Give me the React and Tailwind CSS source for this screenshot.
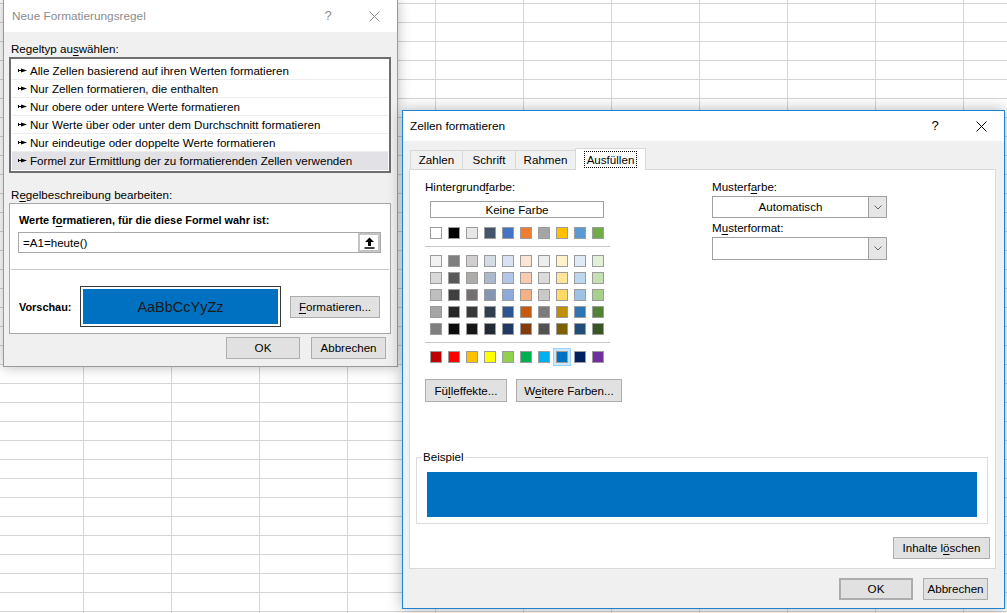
import React from 'react';

// Excel: Bedingte Formatierung + Zellen formatieren (Ausfüllen)

const U = ({ children }) => <span className="underline underline-offset-[2px]">{children}</span>;

const Btn = ({ className = '', children }) => (
  <div className={`flex items-center justify-center h-[22px] bg-[#e1e1e1] border border-[#adadad] ${className}`}>
    {children}
  </div>
);

const CloseIcon = ({ color }) => (
  <svg width="11" height="11" viewBox="0 0 11 11">
    <path d="M0.5 0.5l10 10M10.5 0.5l-10 10" stroke={color} strokeWidth="1" />
  </svg>
);

const Chevron = () => (
  <svg width="8" height="5" viewBox="0 0 8 5">
    <path d="M0.5 0.5l3.5 3.5 3.5-3.5" stroke="#606060" strokeWidth="1" fill="none" />
  </svg>
);

const RuleArrow = () => (
  <svg width="9" height="5" viewBox="0 0 9 5">
    <path d="M0.5 1v3M0 2.5h4" stroke="#000" strokeWidth="1" />
    <path d="M3 0.5L9 2.5 3 4.5z" fill="#000" />
  </svg>
);

const UploadIcon = () => (
  <svg width="11" height="12" viewBox="0 0 11 12">
    <path d="M5.5 0.5L10 5H7v4H4V5H1z" fill="#000" />
    <path d="M0.5 11h10" stroke="#000" strokeWidth="1.5" />
  </svg>
);

const ruleTypes = [
  'Alle Zellen basierend auf ihren Werten formatieren',
  'Nur Zellen formatieren, die enthalten',
  'Nur obere oder untere Werte formatieren',
  'Nur Werte über oder unter dem Durchschnitt formatieren',
  'Nur eindeutige oder doppelte Werte formatieren',
  'Formel zur Ermittlung der zu formatierenden Zellen verwenden',
];

const themeRow = ['#ffffff', '#000000', '#e7e6e6', '#44546a', '#4472c4', '#ed7d31', '#a5a5a5', '#ffc000', '#5b9bd5', '#70ad47'];
const shadeRows = [
  ['#f2f2f2', '#7f7f7f', '#d0cece', '#d6dce4', '#d9e2f3', '#fbe5d5', '#ededed', '#fff2cc', '#deebf6', '#e2efd9'],
  ['#d8d8d8', '#595959', '#aeabab', '#adb9ca', '#b4c6e7', '#f7cbac', '#dbdbdb', '#fee599', '#bdd7ee', '#c5e0b3'],
  ['#bfbfbf', '#3f3f3f', '#757070', '#8496b0', '#8eaadb', '#f4b183', '#c9c9c9', '#ffd965', '#9cc3e5', '#a8d08d'],
  ['#a5a5a5', '#262626', '#3a3838', '#323f4f', '#2f5496', '#c55a11', '#7b7b7b', '#bf8f00', '#2e75b5', '#538135'],
  ['#7f7f7f', '#0c0c0c', '#171616', '#222a35', '#1f3864', '#843c0b', '#525252', '#7f6000', '#1e4e79', '#375623'],
];
const standardRow = ['#c00000', '#ff0000', '#ffc000', '#ffff00', '#92d050', '#00b050', '#00b0f0', '#0070c0', '#002060', '#7030a0'];

const Swatch = ({ color, selected }) => (
  <div
    className={`w-[12px] h-[12px] border border-[#9c9c9c] ${selected ? 'shadow-[0_0_0_2px_#cce8ff,0_0_0_3px_#99d1ff]' : ''}`}
    style={{ backgroundColor: color }}
  />
);

const SwatchRow = ({ colors, selectedIndex = -1 }) => (
  <div className="flex gap-[6px]">
    {colors.map((c, i) => (
      <Swatch key={i} color={c} selected={i === selectedIndex} />
    ))}
  </div>
);

const SheetGrid = () => (
  <div className="absolute inset-0 overflow-hidden">
    <div className="-ml-[4px] -mt-[15px]">
      {Array.from({ length: 34 }).map((_, r) => (
        <div key={r} className="flex">
          {Array.from({ length: 12 }).map((_, c) => (
            <div key={c} className="shrink-0 w-[88px] h-[19px] border-r border-b border-[#d4d4d4]" />
          ))}
        </div>
      ))}
    </div>
  </div>
);

const RuleDialog = () => (
  <div className="absolute left-[3px] top-0 w-[395px] h-[367px] flex flex-col border-x border-b border-[#9a9a9a] bg-[#f0f0f0] shadow-[0_0_12px_rgba(0,0,0,0.28)]">
    <div className="h-[32px] shrink-0 bg-white flex items-center text-[#8c8c8c]">
      <span className="flex-1 pl-[8px] text-[11.8px]">Neue Formatierungsregel</span>
      <span className="w-[46px] text-center text-[13px]">?</span>
      <span className="w-[46px] flex justify-center">
        <CloseIcon color="#8c8c8c" />
      </span>
    </div>

    <div className="flex-1 flex flex-col pt-[9px]">
      <div className="h-[16px] leading-[16px] pl-[7px]">
        Regeltyp au<U>s</U>wählen:
      </div>
      <div className="ml-[5px] w-[382px] h-[116px] border-2 border-[#6e6e6e] bg-white pt-[3px] px-[1px]">
        {ruleTypes.map((t, i) => (
          <div
            key={i}
            className={`h-[18px] flex items-center gap-[3px] pl-[6px] border-b ${
              i === ruleTypes.length - 1 ? 'bg-[#e2e2e6] border-transparent' : 'border-[#ededed]'
            }`}
          >
            <RuleArrow />
            <span className="whitespace-nowrap">{t}</span>
          </div>
        ))}
      </div>

      <div className="mt-[14px] h-[16px] leading-[16px] pl-[7px]">
        R<U>e</U>gelbeschreibung bearbeiten:
      </div>
      <div className="ml-[5px] w-[382px] h-[131px] border border-[#a8a8a8] bg-white flex flex-col">
        <div className="mt-[8px] h-[16px] leading-[16px] pl-[9px] font-bold text-[10.9px]">
          Werte f<U>o</U>rmatieren, für die diese Formel wahr ist:
        </div>
        <div className="mt-[4px] ml-[8px] w-[363px] h-[21px] border border-[#a8a8a8] flex">
          <div className="flex-1 flex items-center pl-[4px]">=A1=heute()</div>
          <div className="w-[22px] border-2 border-[#c4c4c4] bg-white flex items-center justify-center">
            <UploadIcon />
          </div>
        </div>
        <div className="mt-[16px] mx-[1px] h-px bg-[#c8c8c8]" />
        <div className="mt-[16px] flex items-center pl-[9px]">
          <span className="w-[61px] font-bold text-[10.9px]">Vorschau:</span>
          <div className="w-[201px] h-[41px] border border-[#3a3a3a] p-[2px] bg-white">
            <div className="w-full h-full bg-[#0070c0] flex items-center justify-center text-[14.5px] text-[#1a1a1a]">
              AaBbCcYyZz
            </div>
          </div>
          <Btn className="ml-[9px] w-[90px]">
            <span>
              <U>F</U>ormatieren...
            </span>
          </Btn>
        </div>
      </div>

      <div className="mt-[3px] flex justify-end gap-[11px] pr-[11px]">
        <Btn className="w-[74px]">OK</Btn>
        <Btn className="w-[75px]">Abbrechen</Btn>
      </div>
    </div>
  </div>
);

const tabs = [
  { label: 'Zahlen', w: 'w-[53px]' },
  { label: 'Schrift', w: 'w-[54px]' },
  { label: 'Rahmen', w: 'w-[61px]' },
];

const FormatDialog = () => (
  <div className="absolute left-[402px] top-[110px] w-[603px] h-[499px] flex flex-col border border-[#1883d7] bg-[#f0f0f0] shadow-[0_0_14px_rgba(0,0,0,0.3)]">
    <div className="h-[30px] shrink-0 bg-white flex items-center">
      <span className="flex-1 pl-[7px] text-[11.8px]">Zellen formatieren</span>
      <span className="w-[46px] text-center text-[13px]">?</span>
      <span className="w-[46px] flex justify-center">
        <CloseIcon color="#000" />
      </span>
    </div>

    <div className="pt-[7px] pl-[7px] h-[28px] flex items-end">
      {tabs.map((t, i) => (
        <div
          key={t.label}
          className={`${t.w} ${i > 0 ? '-ml-px' : ''} h-[19px] border-x border-t border-[#d9d9d9] flex items-center justify-center`}
        >
          {t.label}
        </div>
      ))}
      <div className="-ml-px w-[71px] h-[22px] -mb-px relative z-10 bg-white border-x border-t border-[#d9d9d9] flex items-center justify-center">
        <span className="border border-dotted border-black px-[2px] leading-[15px]">Ausfüllen</span>
      </div>
    </div>

    <div className="ml-[6px] w-[587px] h-[400px] bg-white border border-[#d9d9d9] flex flex-col">
      <div className="flex h-[232px]">
        <div className="w-[302px] pl-[15px] pt-[9px]">
          <div className="h-[16px] leading-[16px]">
            Hintergrund<U>f</U>arbe:
          </div>
          <div className="ml-[5px] mt-[6px] w-[174px] h-[17px] bg-white border border-[#a0a0a0] flex items-center justify-center">
            Keine Farbe
          </div>
          <div className="ml-[5px] mt-[9px]">
            <SwatchRow colors={themeRow} />
          </div>
          <div className="mt-[7px] w-[185px] h-px bg-[#c4c4c4]" />
          <div className="ml-[5px] mt-[8px] flex flex-col gap-[5px]">
            {shadeRows.map((row, i) => (
              <SwatchRow key={i} colors={row} />
            ))}
          </div>
          <div className="mt-[7px] w-[185px] h-px bg-[#c4c4c4]" />
          <div className="ml-[5px] mt-[8px]">
            <SwatchRow colors={standardRow} selectedIndex={7} />
          </div>
          <div className="mt-[16px] flex gap-[9px]">
            <Btn className="w-[82px] h-[23px]">
              <span>
                Fü<U>l</U>leffekte...
              </span>
            </Btn>
            <Btn className="w-[106px] h-[23px]">
              <span>
                W<U>e</U>itere Farben...
              </span>
            </Btn>
          </div>
        </div>

        <div className="pt-[9px]">
          <div className="h-[16px] leading-[16px]">
            Musterf<U>a</U>rbe:
          </div>
          <div className="mt-[1px] w-[175px] h-[22px] bg-white border border-[#a0a0a0] flex">
            <div className="flex-1 flex items-center justify-center">Automatisch</div>
            <div className="w-[18px] bg-[#e6e6e6] border-l border-[#a0a0a0] flex items-center justify-center">
              <Chevron />
            </div>
          </div>
          <div className="mt-[2px] h-[16px] leading-[16px]">
            M<U>u</U>sterformat:
          </div>
          <div className="mt-[1px] w-[175px] h-[23px] bg-white border border-[#a0a0a0] flex">
            <div className="flex-1" />
            <div className="w-[18px] bg-[#e6e6e6] border-l border-[#a0a0a0] flex items-center justify-center">
              <Chevron />
            </div>
          </div>
        </div>
      </div>

      <div className="mt-[55px] pl-[6px] pr-[5px] flex flex-col">
        <div className="w-[572px] h-[67px] border border-[#dcdcdc]">
          <div className="w-fit -mt-[9px] ml-[5px] px-[1px] h-[16px] leading-[16px] bg-white">Beispiel</div>
          <div className="mt-[7px] ml-[10px] w-[550px] h-[45px] bg-[#0070c0]" />
        </div>
        <div className="mt-[13px] flex justify-end">
          <Btn className="w-[97px]">
            <span>
              Inhalte l<U>ö</U>schen
            </span>
          </Btn>
        </div>
      </div>
    </div>

    <div className="mt-[9px] flex justify-end gap-[10px] pr-[16px]">
      <Btn className="w-[74px] border-2 border-[#0078d7]">OK</Btn>
      <Btn className="w-[65px]">Abbrechen</Btn>
    </div>
  </div>
);

export default function App() {
  return (
    <div className="relative w-[1007px] h-[613px] overflow-hidden bg-white text-black text-[11.6px] leading-[16px] font-['Liberation_Sans',Arial,sans-serif]">
      <SheetGrid />
      <RuleDialog />
      <FormatDialog />
    </div>
  );
}
